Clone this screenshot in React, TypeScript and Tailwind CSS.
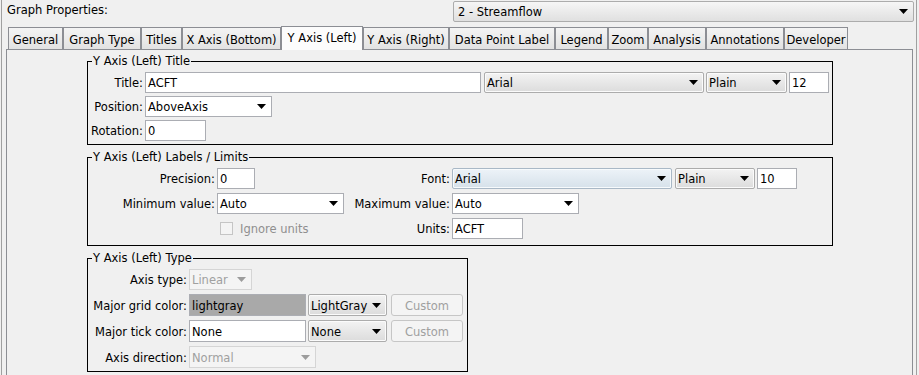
import React from "react";

type ComboKind = "button" | "hover" | "white" | "disabled";

interface TabDef {
  label: string;
  w: string;
  active?: boolean;
}

const tabs: TabDef[] = [
  { label: "General", w: "w-[55px]" },
  { label: "Graph Type", w: "w-[78px]" },
  { label: "Titles", w: "w-[41px]" },
  { label: "X Axis (Bottom)", w: "w-[99px]" },
  { label: "Y Axis (Left)", w: "w-[82px]", active: true },
  { label: "Y Axis (Right)", w: "w-[86px]" },
  { label: "Data Point Label", w: "w-[106px]" },
  { label: "Legend", w: "w-[53px]" },
  { label: "Zoom", w: "w-[40px]" },
  { label: "Analysis", w: "w-[58px]" },
  { label: "Annotations", w: "w-[78px]" },
  { label: "Developer", w: "w-[64px]" },
];

function Arrow({ disabled }: { disabled?: boolean }) {
  return (
    <svg width="9" height="5" viewBox="0 0 9 5" className="shrink-0">
      <path d="M0 0H9L4.5 5Z" fill={disabled ? "#9c9c9c" : "#000"} />
    </svg>
  );
}

function TextField({ w, value, gray }: { w: string; value: string; gray?: boolean }) {
  return (
    <div
      className={`${w} h-full flex items-center pl-[2px] pt-[2px] border border-[#abadb3] ${
        gray ? "bg-[#a9a9a9]" : "bg-white"
      }`}
    >
      {value}
    </div>
  );
}

function Combo({ w, value, kind = "button" }: { w: string; value: string; kind?: ComboKind }) {
  const skin =
    kind === "button"
      ? "rounded-[2px] border-[#acacac] bg-linear-to-b from-[#f3f3f3] to-[#dcdcdc] shadow-[inset_0_0_0_1px_#fbfbfb]"
      : kind === "hover"
      ? "rounded-[2px] border-[#a9b8c6] bg-linear-to-b from-[#edf3f8] to-[#d6e1ea] shadow-[inset_0_0_0_1px_#f7fafc]"
      : kind === "white"
      ? "border-[#abadb3] bg-white"
      : "border-[#d5d5d5] bg-[#f4f4f4] text-[#a0a0a0]";
  return (
    <div className={`${w} h-full flex items-center justify-between pl-[2px] pr-[5px] border ${skin}`}>
      <span className="pt-[2px]">{value}</span>
      <Arrow disabled={kind === "disabled"} />
    </div>
  );
}

function CustomButton() {
  return (
    <div className="w-[72px] h-full flex items-center justify-center pt-[2px] rounded-[3px] border border-[#c6c6c6] bg-[#f4f4f4] text-[#a0a0a0]">
      Custom
    </div>
  );
}

function Label({ children }: { children: React.ReactNode }) {
  return <span className="text-right pr-[2px] pt-[2px]">{children}</span>;
}

function Group({ title, className, children }: { title: string; className: string; children: React.ReactNode }) {
  return (
    <fieldset className={`border border-black ${className}`}>
      <legend className="ml-[4px] px-[1px] leading-[13px]">{title}</legend>
      {children}
    </fieldset>
  );
}

export default function App() {
  return (
    <div className="w-[919px] h-[375px] overflow-hidden bg-[#f0f0f0] text-black text-[11.5px] leading-[13px] font-['DejaVu_Sans',Verdana,sans-serif]">
      <div className="ml-[1px] w-[916px] h-full border-x border-[#a0a0a0]">
        {/* Header */}
        <div className="flex items-start justify-between h-[22px]">
          <span className="pl-[5px] pt-[4px]">Graph Properties:</span>
          <div className="mt-[1px] mr-[2px] w-[461px] h-[21px] flex items-center justify-between pl-[4px] pr-[5px] rounded-[2px] border border-[#acacac] bg-linear-to-b from-[#f6f6f6] to-[#e0e0e0]">
            <span className="pt-[2px]">2 - Streamflow</span>
            <Arrow />
          </div>
        </div>

        {/* Tabs */}
        <div className="mt-[4px] pl-[6px] flex items-end h-[23px]">
          {tabs.map((t) =>
            t.active ? (
              <div
                key={t.label}
                className={`${t.w} relative z-10 -mb-px h-[24px] flex items-start justify-center pt-[5px] border-x border-t border-[#8c8e94] bg-[#fcfcfc] whitespace-nowrap`}
              >
                {t.label}
              </div>
            ) : (
              <div
                key={t.label}
                className={`${t.w} h-[22px] flex items-center justify-center pt-[3px] border-x border-t border-[#8c8e94] bg-linear-to-b from-[#f4f4f4] to-[#e2e2e2] whitespace-nowrap`}
              >
                {t.label}
              </div>
            )
          )}
        </div>

        {/* Tab panel */}
        <div className="ml-[4px] w-[907px] h-[340px] border border-[#8c8e94] pt-[5px] pl-[80px]">
          {/* Title */}
          <Group title="Y Axis (Left) Title" className="w-[746px] pt-[4px] pb-[3px]">
            <div className="grid grid-cols-[57px_auto] auto-rows-[21px] gap-y-[3px] items-center">
              <Label>Title:</Label>
              <div className="flex h-full">
                <TextField w="w-[336px]" value="ACFT" />
                <div className="ml-[3px] h-full">
                  <Combo w="w-[220px]" value="Arial" />
                </div>
                <div className="ml-[2px] h-full">
                  <Combo w="w-[81px]" value="Plain" />
                </div>
                <div className="ml-[2px] h-full">
                  <TextField w="w-[40px]" value="12" />
                </div>
              </div>
              <Label>Position:</Label>
              <div className="h-full">
                <Combo w="w-[127px]" value="AboveAxis" kind="white" />
              </div>
              <Label>Rotation:</Label>
              <div className="h-full">
                <TextField w="w-[61px]" value="0" />
              </div>
            </div>
          </Group>

          {/* Labels / Limits */}
          <Group title="Y Axis (Left) Labels / Limits" className="mt-[6px] w-[746px] pt-[4px] pb-[6px]">
            <div className="grid grid-cols-[129px_127px_108px_auto] auto-rows-[21px] gap-y-[4px] items-center">
              <Label>Precision:</Label>
              <div className="h-full">
                <TextField w="w-[38px]" value="0" />
              </div>
              <Label>Font:</Label>
              <div className="flex h-full">
                <Combo w="w-[220px]" value="Arial" kind="hover" />
                <div className="ml-[3px] h-full">
                  <Combo w="w-[80px]" value="Plain" />
                </div>
                <div className="ml-[2px] h-full">
                  <TextField w="w-[40px]" value="10" />
                </div>
              </div>

              <Label>Minimum value:</Label>
              <div className="h-full">
                <Combo w="w-[127px]" value="Auto" kind="white" />
              </div>
              <Label>Maximum value:</Label>
              <div className="h-full">
                <Combo w="w-[127px]" value="Auto" kind="white" />
              </div>

              <span />
              <div className="flex items-center pl-[3px] gap-[7px] text-[#8f8f8f]">
                <span className="w-[13px] h-[13px] border border-[#c5c5c5] bg-[#f4f4f4]" />
                <span className="pt-[2px]">Ignore units</span>
              </div>
              <Label>Units:</Label>
              <div className="h-full">
                <TextField w="w-[71px]" value="ACFT" />
              </div>
            </div>
          </Group>

          {/* Type */}
          <Group title="Y Axis (Left) Type" className="mt-[6px] w-[381px] pt-[3px] pb-[3px]">
            <div className="grid grid-cols-[101px_auto] auto-rows-[22px] gap-y-[4px] items-center">
              <Label>Axis type:</Label>
              <div className="h-full py-[0.5px]">
                <Combo w="w-[63px]" value="Linear" kind="disabled" />
              </div>
              <Label>Major grid color:</Label>
              <div className="flex h-full">
                <TextField w="w-[117px]" value="lightgray" gray />
                <div className="ml-[2px] h-full">
                  <Combo w="w-[79px]" value="LightGray" />
                </div>
                <div className="ml-[4px] h-full">
                  <CustomButton />
                </div>
              </div>
              <Label>Major tick color:</Label>
              <div className="flex h-full">
                <TextField w="w-[117px]" value="None" />
                <div className="ml-[2px] h-full">
                  <Combo w="w-[79px]" value="None" />
                </div>
                <div className="ml-[4px] h-full">
                  <CustomButton />
                </div>
              </div>
              <Label>Axis direction:</Label>
              <div className="h-full">
                <Combo w="w-[127px]" value="Normal" kind="disabled" />
              </div>
            </div>
          </Group>
        </div>
      </div>
    </div>
  );
}
